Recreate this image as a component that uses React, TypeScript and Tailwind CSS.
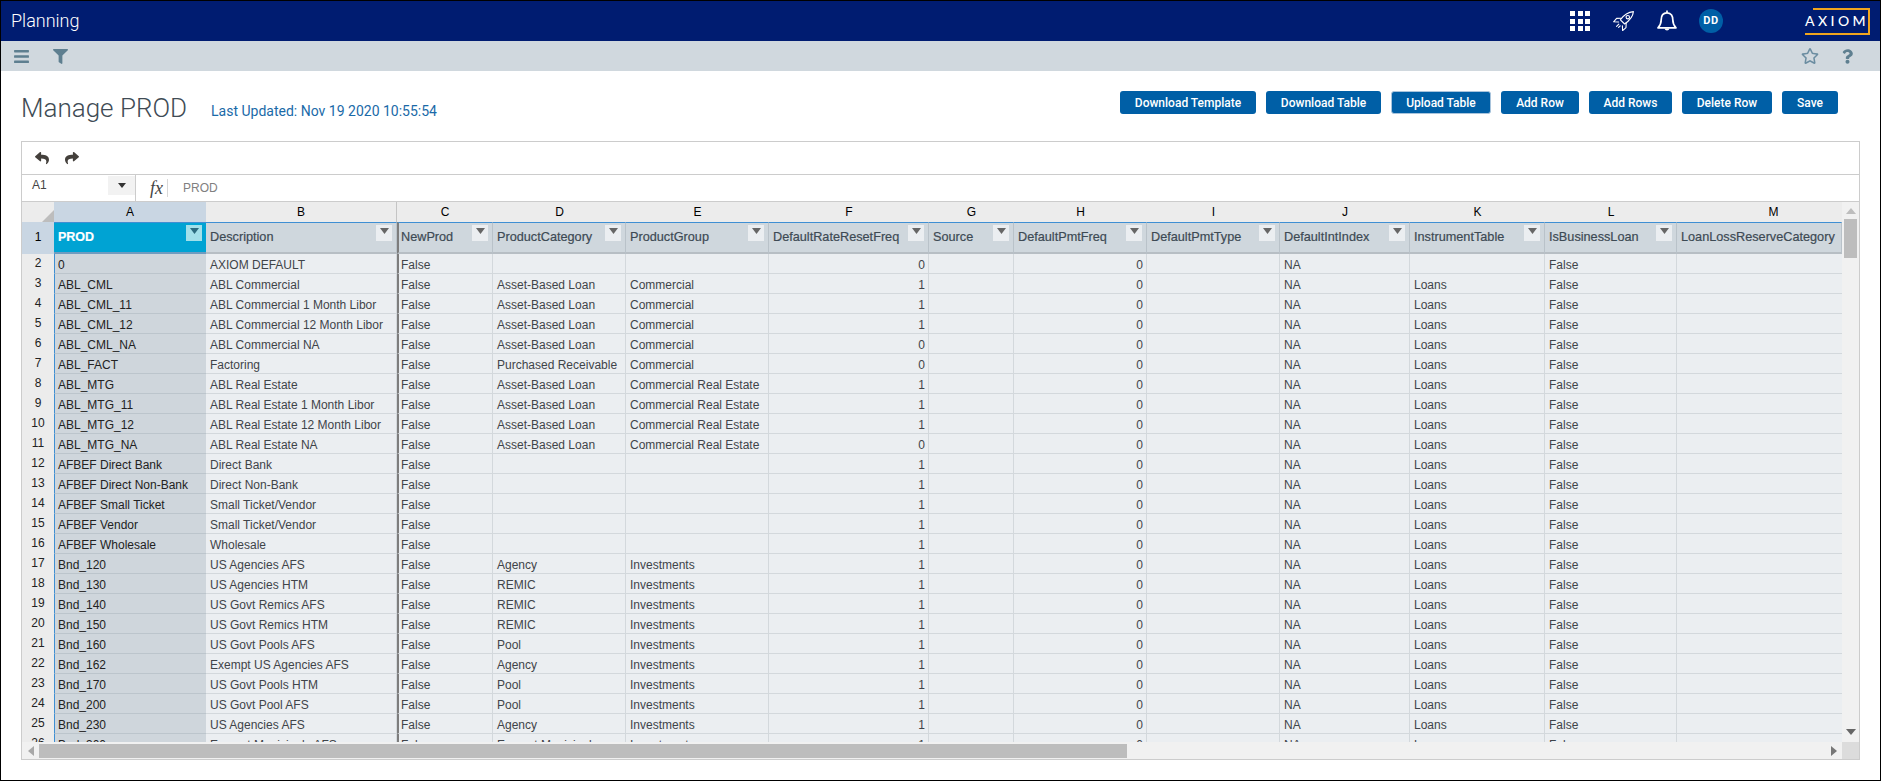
import React from "react";
import { FaBars, FaFilter, FaRegStar, FaQuestion, FaReply, FaShare } from "react-icons/fa";

const COLS = "grid grid-cols-[32px_152px_191px_96px_133px_143px_160px_85px_133px_133px_130px_135px_132px_165px] auto-rows-min";

const letters = ["A","B","C","D","E","F","G","H","I","J","K","L","M"];
const headers = ["PROD","Description","NewProd","ProductCategory","ProductGroup","DefaultRateResetFreq","Source","DefaultPmtFreq","DefaultPmtType","DefaultIntIndex","InstrumentTable","IsBusinessLoan","LoanLossReserveCategory"];

type R = [string,string,string,string,number,string?];
const ABL = "Asset-Based Loan", COM = "Commercial", CRE = "Commercial Real Estate", INV = "Investments";
const rows: R[] = [
  ["0","AXIOM DEFAULT","","",0,""],
  ["ABL_CML","ABL Commercial",ABL,COM,1],
  ["ABL_CML_11","ABL Commercial 1 Month Libor",ABL,COM,1],
  ["ABL_CML_12","ABL Commercial 12 Month Libor",ABL,COM,1],
  ["ABL_CML_NA","ABL Commercial NA",ABL,COM,0],
  ["ABL_FACT","Factoring","Purchased Receivable",COM,0],
  ["ABL_MTG","ABL Real Estate",ABL,CRE,1],
  ["ABL_MTG_11","ABL Real Estate 1 Month Libor",ABL,CRE,1],
  ["ABL_MTG_12","ABL Real Estate 12 Month Libor",ABL,CRE,1],
  ["ABL_MTG_NA","ABL Real Estate NA",ABL,CRE,0],
  ["AFBEF Direct Bank","Direct Bank","","",1],
  ["AFBEF Direct Non-Bank","Direct Non-Bank","","",1],
  ["AFBEF Small Ticket","Small Ticket/Vendor","","",1],
  ["AFBEF Vendor","Small Ticket/Vendor","","",1],
  ["AFBEF Wholesale","Wholesale","","",1],
  ["Bnd_120","US Agencies AFS","Agency",INV,1],
  ["Bnd_130","US Agencies HTM","REMIC",INV,1],
  ["Bnd_140","US Govt Remics AFS","REMIC",INV,1],
  ["Bnd_150","US Govt Remics HTM","REMIC",INV,1],
  ["Bnd_160","US Govt Pools AFS","Pool",INV,1],
  ["Bnd_162","Exempt US Agencies AFS","Agency",INV,1],
  ["Bnd_170","US Govt Pools HTM","Pool",INV,1],
  ["Bnd_200","US Govt Pool AFS","Pool",INV,1],
  ["Bnd_230","US Agencies AFS","Agency",INV,1],
  ["Bnd_300","Exempt Municipals AFS","Exempt Municipals",INV,1],
];

const Btn = ({ children, w, outlined }: { children: string; w: string; outlined?: boolean }) => (
  <button className={`${w} h-[23px] rounded-[3px] bg-[#005fa6] text-white text-[12px] font-medium flex items-center justify-center ${outlined ? "border border-[#a9c4dc]" : ""}`}>
    {children}
  </button>
);

const Cell = ({ children, cls = "", right }: { children?: React.ReactNode; cls?: string; right?: boolean }) => (
  <div className={`h-[20px] bg-[#ebeef1] border-b border-r border-[#d3d8dc] whitespace-nowrap overflow-hidden flex items-center pt-[2px] text-[#3f4449] ${right ? "justify-end pr-[3px]" : "pl-[4px]"} ${cls}`}>
    {children}
  </div>
);

const Arrow = ({ dir, color }: { dir: "up" | "down" | "left" | "right"; color: string }) => {
  const p = { up: "0,6 5,0 10,6", down: "0,0 10,0 5,6", left: "6,0 6,10 0,5", right: "0,0 6,5 0,10" }[dir];
  const vert = dir === "up" || dir === "down";
  return (
    <svg width={vert ? 10 : 6} height={vert ? 6 : 10} viewBox={vert ? "0 0 10 6" : "0 0 6 10"}>
      <polygon points={p} fill={color} />
    </svg>
  );
};

const Rocket = () => (
  <svg width="21" height="20" viewBox="0 0 21 20" fill="none" stroke="white" strokeWidth="1.1" strokeLinejoin="round" strokeLinecap="round">
    <path d="M20.4 0.6C15 1 10.8 4 7.4 8.8L11.6 13C16.4 9.6 20 5.6 20.4 0.6Z" />
    <circle cx="14.8" cy="6.2" r="1.7" />
    <path d="M8.6 7.2L3.6 7.4L0.6 10.8L5.6 11" />
    <path d="M13.2 11.8L13 16.6L9.6 19.6L9.4 14.8" />
    <path d="M5.8 13.2L3.6 15.4M7.2 14.8L5.6 16.4" />
  </svg>
);

const Bell = () => (
  <svg width="20" height="22" viewBox="0 0 20 22" fill="none" stroke="white" strokeWidth="1.7" strokeLinejoin="round">
    <path d="M10 2.8C5.6 2.8 4.2 6.2 4.2 9.8C4.2 13.6 3.2 15.6 1 17.8L19 17.8C16.8 15.6 15.8 13.6 15.8 9.8C15.8 6.2 14.4 2.8 10 2.8Z" />
    <path d="M10 0.4V2.8" />
    <path d="M7.6 18.6C8 21.2 12 21.2 12.4 18.6Z" fill="white" stroke="none" />
  </svg>
);

export default function App() {
  return (
    <div className="w-[1881px] h-[781px] border border-black bg-white overflow-hidden flex flex-col font-['Roboto',sans-serif]">
      <header className="h-[40px] shrink-0 bg-[#001c71] flex items-center text-white">
        <div className="ml-[10px] text-[18px] font-light leading-none">Planning</div>
        <div className="ml-auto flex items-center">
          <div className="grid grid-cols-3 gap-[2.5px] w-[20px]">
            {Array.from({ length: 9 }).map((_, i) => (
              <span key={i} className="w-[5px] h-[5px] bg-white" />
            ))}
          </div>
          <div className="ml-[23px]"><Rocket /></div>
          <div className="ml-[23px]"><Bell /></div>
          <div className="ml-[22px] w-[24px] h-[24px] rounded-full bg-[#005fa6] flex items-center justify-center text-[11px] font-bold tracking-[0.5px]">DD</div>
          <div className="relative ml-[82px] mr-[10px] w-[65px] h-[27px] flex items-center justify-center text-[14px] font-medium tracking-[3.4px] font-['Lato',sans-serif] leading-none">
            <span className="absolute left-[8px] top-0 right-0 h-[2px] bg-[#f0a51e]" />
            <span className="absolute right-0 top-0 bottom-0 w-[2px] bg-[#f0a51e]" />
            <span className="absolute left-0 bottom-0 right-0 h-[2px] bg-[#f0a51e]" />
            <span className="pr-[1px]">AXIOM</span>
          </div>
        </div>
      </header>

      <div className="h-[30px] shrink-0 bg-[#d0d8de] flex items-center text-[#5e7f90]">
        <FaBars className="ml-[12px] w-[17px] h-[17px]" />
        <FaFilter className="ml-[23px] w-[15px] h-[15px]" />
        <FaRegStar className="ml-auto w-[18px] h-[18px] text-[#6b8da1]" />
        <FaQuestion className="ml-[23px] mr-[27px] w-[11px] h-[15px]" />
      </div>

      <div className="h-[70px] shrink-0 flex items-start pl-[20px] pr-[42px]">
        <h1 className="mt-[20px] text-[26px] leading-[34px] font-light text-[#404b55]">Manage PROD</h1>
        <div className="mt-[30px] ml-[24px] text-[14px] leading-[20px] text-[#1a6aa8]">Last Updated: Nov 19 2020 10:55:54</div>
        <div className="ml-auto mt-[20px] flex gap-[10px]">
          <Btn w="w-[136px]">Download Template</Btn>
          <Btn w="w-[115px]">Download Table</Btn>
          <Btn w="w-[100px]" outlined>Upload Table</Btn>
          <Btn w="w-[78px]">Add Row</Btn>
          <Btn w="w-[83px]">Add Rows</Btn>
          <Btn w="w-[90px]">Delete Row</Btn>
          <Btn w="w-[56px]">Save</Btn>
        </div>
      </div>

      <section className="ml-[20px] w-[1839px] h-[619px] border border-[#cccccc] flex flex-col font-['Liberation_Sans',Arial,sans-serif] text-[12px]">
        <div className="h-[33px] shrink-0 border-b border-[#cccccc] flex items-center text-[#44403c]">
          <FaReply className="ml-[13px] w-[14px] h-[14px]" />
          <FaShare className="ml-[16px] w-[14px] h-[14px]" />
        </div>
        <div className="h-[27px] shrink-0 border-b border-[#cccccc] flex items-stretch">
          <div className="w-[114px] border-r border-[#cccccc] flex items-start pt-[1px]">
            <div className="flex-1 h-[19px] pl-[10px] pb-[1px] flex items-center text-[#444]">A1</div>
            <div className="w-[27px] h-[19px] bg-[#f2f2f2] flex items-center justify-center">
              <svg width="8" height="5" viewBox="0 0 8 5"><polygon points="0,0 8,0 4,5" fill="#333" /></svg>
            </div>
          </div>
          <div className="ml-[14px] mt-[4px] h-[18px] w-[18px] border-r border-[#d8d8d8] font-['Liberation_Serif',serif] italic text-[18px] leading-[18px] text-[#444]">fx</div>
          <div className="ml-[15px] flex items-center text-[#808080]">PROD</div>
        </div>

        <div className="flex h-[540px] shrink-0">
          <div className="w-[1820px] h-[540px] overflow-hidden">
            <div className={COLS}>
              <div className="h-[20px] bg-[#ececec] flex items-end justify-end">
                <svg width="12" height="12" viewBox="0 0 12 12"><polygon points="12,0 12,12 0,12" fill="#bdbdbd" /></svg>
              </div>
              {letters.map((l, i) => (
                <div key={l} className={`h-[20px] flex items-center justify-center text-black ${i === 0 ? "bg-[#c9d6e3]" : "bg-[#ececec]"} ${i === 1 ? "border-r border-[#c4c4c4]" : ""} ${i === 12 ? "pl-[28px]" : ""}`}>{l}</div>
              ))}

              <div className="h-[32px] bg-[#c9d6e3] flex items-center justify-center text-black pb-[2px]">1</div>
              {headers.map((h, i) => (
                <div
                  key={h}
                  className={`relative h-[32px] border-t border-t-[#3f8fd3] border-b-2 whitespace-nowrap flex items-center ${
                    i === 0
                      ? "bg-[#00a3d3] border-b-[#6f9cc0] text-white font-bold text-[12.5px]"
                      : "bg-[#cfd7dd] border-b-[#b7bec4] border-r border-r-[#b9c2c9] text-[#3d4a54] text-[12.7px]"
                  } ${i === 2 ? "border-l-2 border-l-[#7d7d7d] pl-[2px]" : "pl-[4px]"}`}
                >
                  <span className="[-webkit-text-stroke:0.2px_currentColor]">{h}</span>
                  {i !== 12 && (
                    <span className={`absolute top-[2px] right-[4px] w-[16px] h-[16px] flex items-center justify-center ${i === 0 ? "bg-[#a2e0ea]" : "bg-[#ebeef1]"}`}>
                      <svg width="9" height="6" viewBox="0 0 9 6" className="-mt-[4px]"><polygon points="0,0 9,0 4.5,6" fill={i === 0 ? "#2c6c80" : "#666"} /></svg>
                    </span>
                  )}
                </div>
              ))}

              {rows.map((r, idx) => (
                <React.Fragment key={idx}>
                  <div className="h-[20px] bg-[#ececec] flex items-center justify-center text-[#222] pb-[3px]">{idx + 2}</div>
                  <div className="h-[20px] bg-[#cfd6dc] border-l border-l-[#3f8fd3] border-b border-b-[#bcc5cc] whitespace-nowrap overflow-hidden flex items-center pl-[3px] pt-[2px] text-[#222]">{r[0]}</div>
                  <Cell>{r[1]}</Cell>
                  <Cell cls="border-l-2 border-l-[#7d7d7d] !pl-[2px]">False</Cell>
                  <Cell>{r[2]}</Cell>
                  <Cell>{r[3]}</Cell>
                  <Cell right>{r[4]}</Cell>
                  <Cell />
                  <Cell right>0</Cell>
                  <Cell />
                  <Cell>NA</Cell>
                  <Cell>{idx === 0 ? "" : "Loans"}</Cell>
                  <Cell>False</Cell>
                  <Cell cls="border-r-0" />
                </React.Fragment>
              ))}
            </div>
          </div>
          <div className="w-[17px] bg-[#f1f1f1] flex flex-col items-center">
            <div className="h-[17px] flex items-center justify-center"><Arrow dir="up" color="#bdbdbd" /></div>
            <div className="w-[13px] h-[39px] bg-[#bdbdbd]" />
            <div className="mt-auto h-[20px] flex items-center justify-center"><Arrow dir="down" color="#666666" /></div>
          </div>
        </div>

        <div className="flex h-[17px] shrink-0">
          <div className="w-[1820px] bg-[#f1f1f1] flex items-center">
            <div className="w-[17px] flex justify-center"><Arrow dir="left" color="#a8a8a8" /></div>
            <div className="w-[1088px] h-[14px] bg-[#bdbdbd]" />
            <div className="ml-auto w-[17px] flex justify-center"><Arrow dir="right" color="#777777" /></div>
          </div>
          <div className="w-[17px] bg-[#dcdcdc]" />
        </div>
      </section>
    </div>
  );
}
